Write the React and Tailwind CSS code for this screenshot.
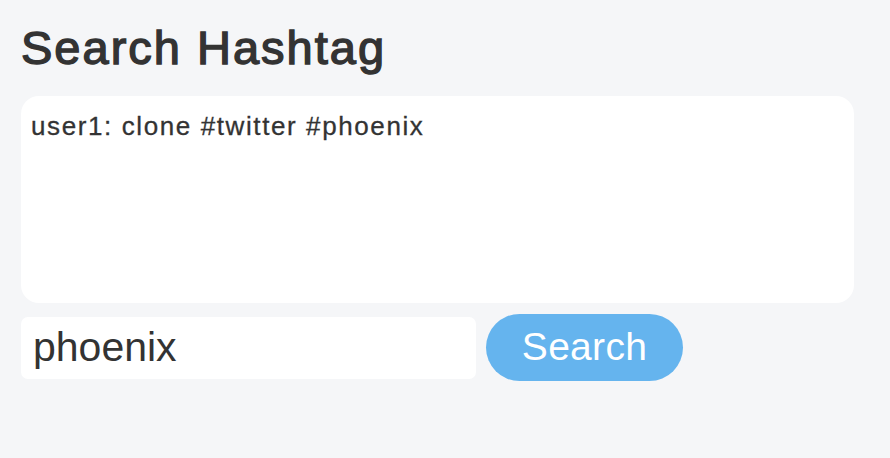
export default function App() {
  return (
    <div className="min-h-[458px] w-full bg-[#f5f6f8] pl-[21px] pr-[36px] pt-[22px] text-[#333333]" style={{ fontFamily: '"Liberation Sans", Arial, sans-serif' }}>
      <h1 className="text-[47px] font-normal leading-[52px] tracking-[2px] [-webkit-text-stroke:1.4px_#333333]">Search Hashtag</h1>
      <div className="mt-[22px] h-[207px] w-[833px] rounded-[18px] bg-white px-[10px] pt-[15px]">
        <p className="text-[26px] leading-[30px] tracking-[1.6px] [-webkit-text-stroke:0.3px_#333333]">user1: clone #twitter #phoenix</p>
      </div>
      <div className="mt-[11px] flex items-center gap-[10px]">
        <input
          readOnly
          value="phoenix"
          className="h-[62px] w-[455px] rounded-[7px] bg-white px-[12px] text-[41px] text-[#333333] outline-none"
          style={{ fontFamily: '"Liberation Sans", Arial, sans-serif' }}
        />
        <button className="h-[67px] w-[197px] rounded-full bg-[#65b4ee] text-[39px] tracking-[0.3px] text-white" style={{ fontFamily: '"Liberation Sans", Arial, sans-serif' }}>
          Search
        </button>
      </div>
    </div>
  );
}
